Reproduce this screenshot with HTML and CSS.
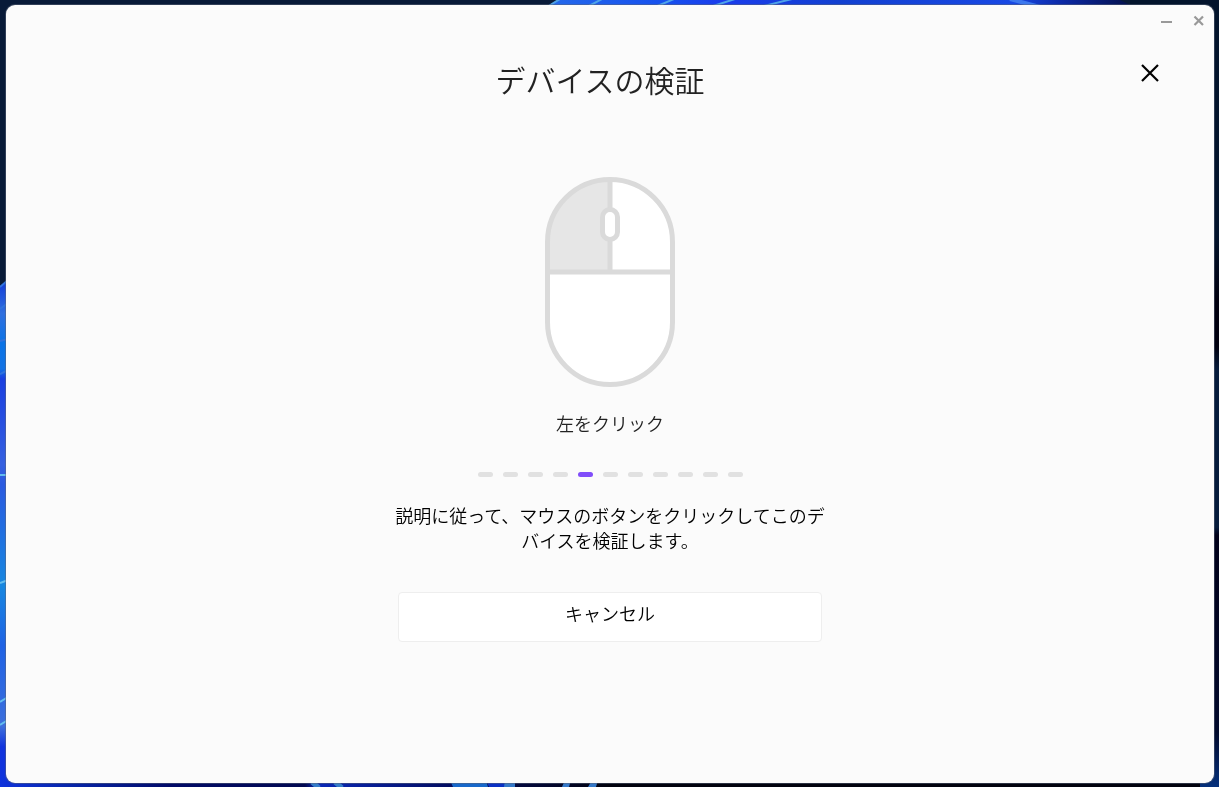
FILE: index.html
```
<!DOCTYPE html>
<html lang="ja">
<head>
    <meta charset="UTF-8">
    <meta name="viewport" content="width=device-width, initial-scale=1.0">
    <title>デバイスの検証</title>
    <link rel="stylesheet" href="styles.css">
</head>
<body>
    <!-- Desktop wallpaper behind the window -->
    <svg class="wallpaper" viewBox="0 0 1219 787" preserveAspectRatio="none" aria-hidden="true">
        <defs>
            <linearGradient id="left" x1="0" y1="283" x2="0" y2="787" gradientUnits="userSpaceOnUse">
                <stop offset="0" stop-color="#143fd8"/>
                <stop offset="0.06" stop-color="#2f6fdf"/>
                <stop offset="0.12" stop-color="#0a73e6"/>
                <stop offset="0.17" stop-color="#1272e4"/>
                <stop offset="0.19" stop-color="#1a3fe0"/>
                <stop offset="0.36" stop-color="#3560e0"/>
                <stop offset="0.4" stop-color="#2a5ae0"/>
                <stop offset="0.6" stop-color="#1787e0"/>
                <stop offset="0.72" stop-color="#1f62e4"/>
                <stop offset="0.88" stop-color="#3d6fdc"/>
                <stop offset="0.92" stop-color="#1133dd"/>
                <stop offset="1" stop-color="#0f33dc"/>
            </linearGradient>
            <linearGradient id="top" x1="548" y1="0" x2="1130" y2="0" gradientUnits="userSpaceOnUse">
                <stop offset="0" stop-color="#2468ea"/>
                <stop offset="0.2" stop-color="#1650ee"/>
                <stop offset="0.3" stop-color="#1a3cec"/>
                <stop offset="0.5" stop-color="#1240d0"/>
                <stop offset="0.8" stop-color="#1848e4"/>
                <stop offset="0.88" stop-color="#0c2aa8"/>
                <stop offset="1" stop-color="#04104c"/>
            </linearGradient>
            <linearGradient id="bottom" x1="0" y1="0" x2="610" y2="0" gradientUnits="userSpaceOnUse">
                <stop offset="0" stop-color="#0f33dc"/>
                <stop offset="0.12" stop-color="#0624a8"/>
                <stop offset="0.28" stop-color="#010a68"/>
                <stop offset="0.5" stop-color="#010850"/>
                <stop offset="0.52" stop-color="#0a28b8"/>
                <stop offset="0.74" stop-color="#020c60"/>
                <stop offset="1" stop-color="#01020e"/>
            </linearGradient>
            <linearGradient id="right" x1="0" y1="0" x2="0" y2="787" gradientUnits="userSpaceOnUse">
                <stop offset="0" stop-color="#03142c"/>
                <stop offset="0.3" stop-color="#03142c"/>
                <stop offset="0.38" stop-color="#010110"/>
                <stop offset="0.44" stop-color="#010110"/>
                <stop offset="0.47" stop-color="#061c3c"/>
                <stop offset="0.67" stop-color="#061c3c"/>
                <stop offset="0.68" stop-color="#01011a"/>
                <stop offset="0.93" stop-color="#020a2c"/>
                <stop offset="1" stop-color="#05307c"/>
            </linearGradient>
        </defs>
        <rect width="1219" height="787" fill="#081a38"/>
        <rect x="1130" width="89" height="787" fill="url(#right)"/>
        <rect y="780" x="600" width="600" height="7" fill="#01020e"/>
        <path d="M0 286L10 278V787H0z" fill="url(#left)"/>
        <rect y="780" width="610" height="7" fill="url(#bottom)"/>
        <path d="M546 8L558 0H1120L1136 8z" fill="url(#top)"/>
        <g fill="none" stroke="#4fa3e8" stroke-width="2">
            <path d="M0 287L8 280M0 309L8 303M0 341L8 339M0 374L8 370" stroke="#2f72dc"/>
            <path d="M0 475L8 475M0 583L8 580M0 702L8 697M0 725L8 720" stroke="#62bdee"/>
            <path d="M547 7L560 -1M587 7L602 -1M655 7L674 -1M710 7L735 -1M760 7L792 -1"/>
            <path d="M1010 -1L1040 7" stroke="#3c78ee" stroke-width="4"/>
            <path d="M312 782L319 788M335 782L342 788" stroke-width="5" stroke="#347cc8"/>
        </g>
        <path d="M450 780H486L488 787H453z" fill="#1768ca"/>
        <path d="M486 780H505V787H489z" fill="#0a30c4"/>
        <path d="M505 780H515V787H504zM562 787L565 780H571L569 787zM588 787L592 780H598L596 787z" fill="#3478c8"/>
    </svg>

    <div class="window">
        <div class="title-bar">
            <button class="window-btn" type="button" aria-label="最小化">
                <svg width="12" height="12" viewBox="0 0 12 12"><path d="M1 7h11" stroke="currentColor" stroke-width="2"/></svg>
            </button>
            <button class="window-btn" type="button" aria-label="ウィンドウを閉じる">
                <svg width="12" height="12" viewBox="0 0 12 12"><path d="M2.5 1.5l8.5 8.5M11 1.5l-8.5 8.5" stroke="currentColor" stroke-width="2.2"/></svg>
            </button>
        </div>

        <header class="header">
            <h1>デバイスの検証</h1>
            <button class="close-btn" type="button" aria-label="閉じる">
                <svg width="20" height="20" viewBox="0 0 20 20"><path d="M2 2l16 16M18 2L2 18" stroke="currentColor" stroke-width="2.2"/></svg>
            </button>
        </header>

        <main class="content">
            <svg class="mouse" width="130" height="210" viewBox="0 0 130 210" aria-hidden="true">
                <path d="M2.5 65a62.5 62.5 0 0 1 125 0v80a62.5 62.5 0 0 1-125 0z" fill="#fff"/>
                <path d="M2.5 95V65A62.5 62.5 0 0 1 65 2.5V95z" fill="#e6e6e6"/>
                <path d="M65 2.5V95M2.5 95h125" stroke="#dadada" stroke-width="5"/>
                <path d="M2.5 65a62.5 62.5 0 0 1 125 0v80a62.5 62.5 0 0 1-125 0z" fill="none" stroke="#dadada" stroke-width="5"/>
                <rect x="57.5" y="32.5" width="15" height="30" rx="7.5" fill="#fff" stroke="#dadada" stroke-width="5"/>
            </svg>
            <p class="action">左をクリック</p>

            <div class="steps">
                <span class="step"></span>
                <span class="step"></span>
                <span class="step"></span>
                <span class="step"></span>
                <span class="step active"></span>
                <span class="step"></span>
                <span class="step"></span>
                <span class="step"></span>
                <span class="step"></span>
                <span class="step"></span>
                <span class="step"></span>
            </div>

            <p class="description">説明に従って、マウスのボタンをクリックしてこのデバイスを検証します。</p>
            <button class="cancel-btn" type="button">キャンセル</button>
        </main>
    </div>
</body>
</html>
```

FILE: styles.css
```
* {
    margin: 0;
    padding: 0;
    box-sizing: border-box;
}

body {
    display: flex;
    min-height: 100vh;
    padding: 5px 5px 4px 6px;
    background: #081a38;
    color: #000;
    font-family: "Noto Sans CJK JP", sans-serif;
    font-size: 18px;
    font-weight: 350;
    line-height: 25px;
}

button {
    border: none;
    background: none;
    font: inherit;
    color: inherit;
    cursor: pointer;
}

.wallpaper {
    position: fixed;
    top: 0;
    left: 0;
    width: 100%;
    height: 100%;
    z-index: -1;
}

.window {
    flex: 1;
    background: #fbfbfb;
    border-radius: 9px;
    box-shadow: 0 0 0 1px rgba(90, 100, 120, 0.5);
}

.title-bar {
    display: flex;
    justify-content: flex-end;
    height: 32px;
}

.window-btn {
    display: flex;
    align-items: center;
    justify-content: center;
    width: 32px;
    color: #999;
}

.header {
    display: flex;
    align-items: flex-start;
    padding: 16px 44px 0 64px;
}

.header h1 {
    flex: 1;
    padding-top: 4px;
    color: #222;
    font-size: 30px;
    font-weight: 350;
    line-height: 44px;
    text-align: center;
}

.close-btn {
    display: flex;
    align-items: center;
    justify-content: center;
    width: 40px;
    height: 40px;
}

.content {
    display: flex;
    flex-direction: column;
    align-items: center;
    padding: 76px 24px 40px;
}

.action {
    margin-top: 24px;
    color: #222;
}

.steps {
    display: flex;
    gap: 10px;
    margin-top: 36px;
}

.step {
    width: 15px;
    height: 5px;
    border-radius: 3px;
    background: #e1e1e1;
}

.step.active {
    background: #814efa;
}

.description {
    max-width: 440px;
    margin-top: 26px;
    text-align: center;
}

.cancel-btn {
    width: 424px;
    max-width: 100%;
    height: 50px;
    margin-top: 39px;
    padding-bottom: 8px;
    border: 1px solid #eee;
    border-radius: 4px;
    background: #fff;
}
```
